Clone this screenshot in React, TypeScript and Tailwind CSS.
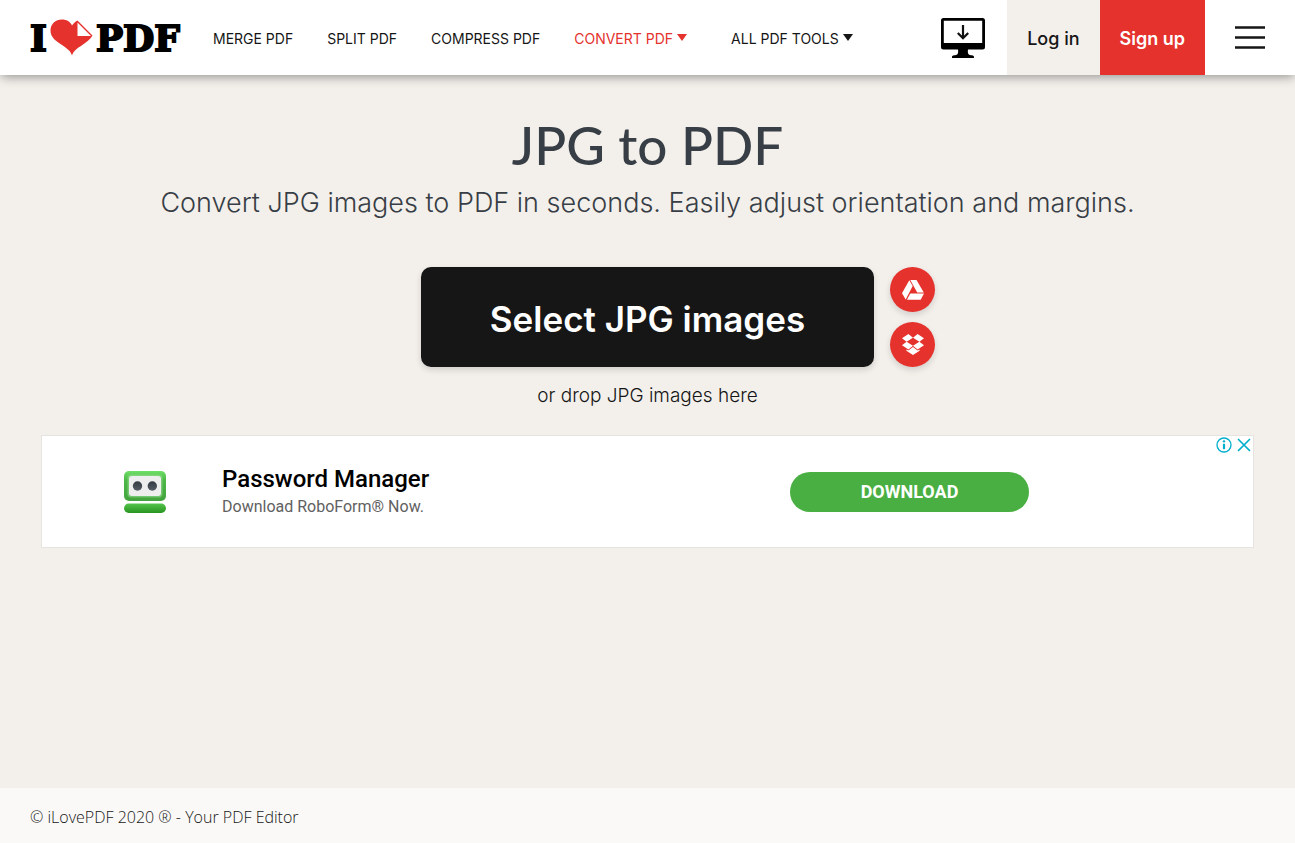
import type { ReactNode } from "react";

const links = [
  { label: "MERGE PDF" },
  { label: "SPLIT PDF" },
  { label: "COMPRESS PDF" },
  { label: "CONVERT PDF", menu: true, active: true },
  { label: "ALL PDF TOOLS", menu: true },
];

function Logo() {
  return (
    <a
      href="#"
      aria-label="iLovePDF"
      className="flex w-[151px] shrink-0 items-center font-['DejaVu_Serif',serif] text-4xl leading-10 font-bold text-black [-webkit-text-stroke:2px_#000]"
    >
      <span className="w-5">I</span>
      <svg viewBox="0 0 43 37" className="h-[37px] w-[43px] shrink-0" aria-hidden="true">
        <path
          d="M22 36.5 C20.8 32 17 29.5 12 26 C6 22 .5 18.500.5 11.500 C.5 5 5.500.5 12 .5 C16.500.5 20.200 2.500 22 6.500 C23.500 4.500 25 2.800 27.500 1.500 L42.500 16.500 C40.500 20.500 36 23.500 32 26.200 C27 29.500 23.200 32 22 36.500Z"
          fill="#e5322d"
        />
        <path d="M27.500 3.500V17H41Z" fill="#fff" />
      </svg>
      <span className="pl-[3px]">PDF</span>
    </a>
  );
}

function Caret() {
  return (
    <svg viewBox="0 0 10 7" className="mb-[3px] h-[7px] w-2.5" aria-hidden="true">
      <path d="M0 0h10L5 7z" fill="currentColor" />
    </svg>
  );
}

function Monitor() {
  return (
    <svg viewBox="0 0 44 40" className="h-10 w-11" aria-hidden="true">
      <path
        fillRule="evenodd"
        d="M2.500 0h39A2.500 2.500 0 0 1 44 2.500v26.500a2.500 2.500 0 0 1-2.500 2.500H27c-.5 3.500 0 5.500 3 5.800 3 .2 3 .8 3 2.700H11c0-1.900 0-2.500 3-2.700 3-.3 3.500-2.300 3-5.800H2.500A2.500 2.500 0 0 1 0 29V2.500A2.500 2.500 0 0 1 2.500 0ZM2.800 2.800v22.200h38.400V2.800Z"
      />
      <path d="M22 7V20M16.800 15l5.200 5.300 5.200-5.300" fill="none" stroke="#111" strokeWidth="2.200" />
    </svg>
  );
}

function RoundButton({ label, children }: { label: string; children: ReactNode }) {
  return (
    <button
      type="button"
      aria-label={label}
      className="flex size-[45px] items-center justify-center rounded-full bg-[#e5322d] shadow-[0_3px_6px_rgba(0,0,0,0.14)]"
    >
      {children}
    </button>
  );
}

function RoboFormLogo() {
  return (
    <svg viewBox="0 0 42 42" className="size-[42px]" aria-hidden="true">
      <defs>
        <linearGradient id="head" x2="0" y2="1">
          <stop offset="0" stopColor="#6fe067" />
          <stop offset=".3" stopColor="#4db848" />
          <stop offset="1" stopColor="#43a33e" />
        </linearGradient>
        <linearGradient id="base" x2="0" y2="1">
          <stop offset="0" stopColor="#55c44c" />
          <stop offset="1" stopColor="#279420" />
        </linearGradient>
        <linearGradient id="eye" x2="0" y2="1">
          <stop offset="0" stopColor="#353b43" />
          <stop offset="1" stopColor="#555c65" />
        </linearGradient>
      </defs>
      <rect width="42" height="30" rx="5" fill="url(#head)" />
      <rect x="3.500" y="3.500" width="35" height="23" rx="4" fill="#9ade95" opacity=".55" />
      <rect x="5" y="5" width="32" height="20" rx="3" fill="#eeeeef" />
      <circle cx="13.500" cy="15" r="4.700" fill="url(#eye)" />
      <circle cx="28.300" cy="15" r="4.700" fill="url(#eye)" />
      <rect y="32.500" width="42" height="9.500" rx="4.700" fill="url(#base)" />
    </svg>
  );
}

export default function App() {
  return (
    <div className="flex min-h-screen flex-col bg-[#f3f0ec] font-['Inter',sans-serif] text-[#161616]">
      <header className="relative flex h-[75px] bg-white shadow-[0_3px_10px_-1px_rgba(0,0,0,0.38)]">
        <div className="flex items-center pl-[30px]">
          <Logo />
        </div>
        <nav className="flex items-center gap-[34px] pt-0.5 pl-8 text-sm whitespace-nowrap">
          {links.map((l) => (
            <a
              key={l.label}
              href="#"
              className={`flex items-center gap-1 ${l.active ? "mr-2.5 text-[#e5322d]" : ""}`}
            >
              {l.label}
              {l.menu && <Caret />}
            </a>
          ))}
        </nav>
        <div className="ml-auto flex">
          <a href="#" aria-label="Desktop app" className="flex items-center px-[22px]">
            <Monitor />
          </a>
          <a href="#" className="flex items-center bg-[#f3f0ec] px-5 pt-0.5 text-lg font-medium">
            Log in
          </a>
          <a href="#" className="flex items-center bg-[#e5322d] px-5 pt-0.5 text-lg font-semibold text-white">
            Sign up
          </a>
          <button type="button" aria-label="Menu" className="flex items-center px-[30px]">
            <svg viewBox="0 0 30 24" className="h-6 w-[30px]" aria-hidden="true">
              <path d="M0 1.500h30M0 11.500h30M0 21.500h30" stroke="#161616" strokeWidth="2.600" />
            </svg>
          </button>
        </div>
      </header>

      <main className="flex flex-1 flex-col items-center px-[41px] pt-10">
        <h1 className="font-['Lato',sans-serif] text-[53px] leading-[60px] font-medium text-[#383e45]">JPG to PDF</h1>
        <p className="mt-2 text-center text-[27px] leading-10 font-light text-[#383e45]">
          Convert JPG images to PDF in seconds. Easily adjust orientation and margins.
        </p>

        <div className="mt-11 grid w-full grid-cols-[1fr_auto_1fr] gap-4">
          <button
            type="button"
            className="col-start-2 h-[100px] w-[453px] rounded-[10px] bg-[#161616] pt-1 text-[35px] font-semibold text-white shadow-[0_3px_6px_rgba(0,0,0,0.14)]"
          >
            Select JPG images
          </button>
          <div className="flex flex-col gap-2.5">
            <RoundButton label="Google Drive">
              <svg viewBox="0 0 22 20" className="h-5 w-[22px]" fill="#fff" aria-hidden="true">
                <path d="M7.300.2 10.700 6 3.700 19.600 0 13.200Z" />
                <path d="M8.300 0h6.200l7.300 12.600h-6.600Z" />
                <path d="M8.300 13.600H22l-3.300 6.200H4.900Z" />
              </svg>
            </RoundButton>
            <RoundButton label="Dropbox">
              <svg viewBox="0 0 22 21" className="h-[21px] w-[22px]" fill="#fff" aria-hidden="true">
                <path d="M6.400 0 11 3.700 4.600 7.700 0 4.200ZM15.600 0 11 3.700l6.400 4L22 4.200ZM4.600 7.700 11 11.700 6.400 15.400 0 11.300ZM17.400 7.700 11 11.700l4.600 3.700 6.400-4.100ZM11 12.900l4.600 3.700 2-1.200v1.400L11 20.900l-6.600-4.100v-1.400l2 1.200Z" />
              </svg>
            </RoundButton>
          </div>
        </div>
        <p className="mt-[15px] text-[19px] leading-7 font-light">or drop JPG images here</p>

        <aside className="relative mt-[25px] flex h-[113px] w-full items-center border border-[#e6e4e1] bg-white pr-[224px] pl-[82px] font-['Roboto',sans-serif]">
          <RoboFormLogo />
          <div className="ml-14 flex-1 pt-[3px]">
            <h2 className="text-2xl leading-7 font-medium text-black">Password Manager</h2>
            <p className="text-base leading-7 text-[#616161]">Download RoboForm® Now.</p>
          </div>
          <button
            type="button"
            className="h-10 w-[239px] rounded-full bg-[#4aaf42] text-lg font-bold text-white"
          >
            DOWNLOAD
          </button>
          <div className="absolute top-px right-px flex items-center gap-1">
            <button type="button" aria-label="Ad information">
              <svg viewBox="0 0 16 16" className="size-4" fill="none" stroke="#00aecd" aria-hidden="true">
                <circle cx="8" cy="8" r="7" strokeWidth="1.300" />
                <path d="M8 6.800v5.400" strokeWidth="2.200" />
                <circle cx="8" cy="4.400" r=".8" strokeWidth="1" fill="#00aecd" />
              </svg>
            </button>
            <button type="button" aria-label="Close ad">
              <svg viewBox="0 0 16 16" className="size-4" fill="none" stroke="#00aecd" aria-hidden="true">
                <path d="m2.500 2.500 11 11m0-11-11 11" strokeWidth="1.700" strokeLinecap="round" />
              </svg>
            </button>
          </div>
        </aside>
      </main>

      <footer className="flex h-[55px] items-center bg-[#faf9f7] px-[30px] pt-0.5 font-['Open_Sans',sans-serif] text-base font-light">
        © iLovePDF 2020 ® - Your PDF Editor
      </footer>
    </div>
  );
}
